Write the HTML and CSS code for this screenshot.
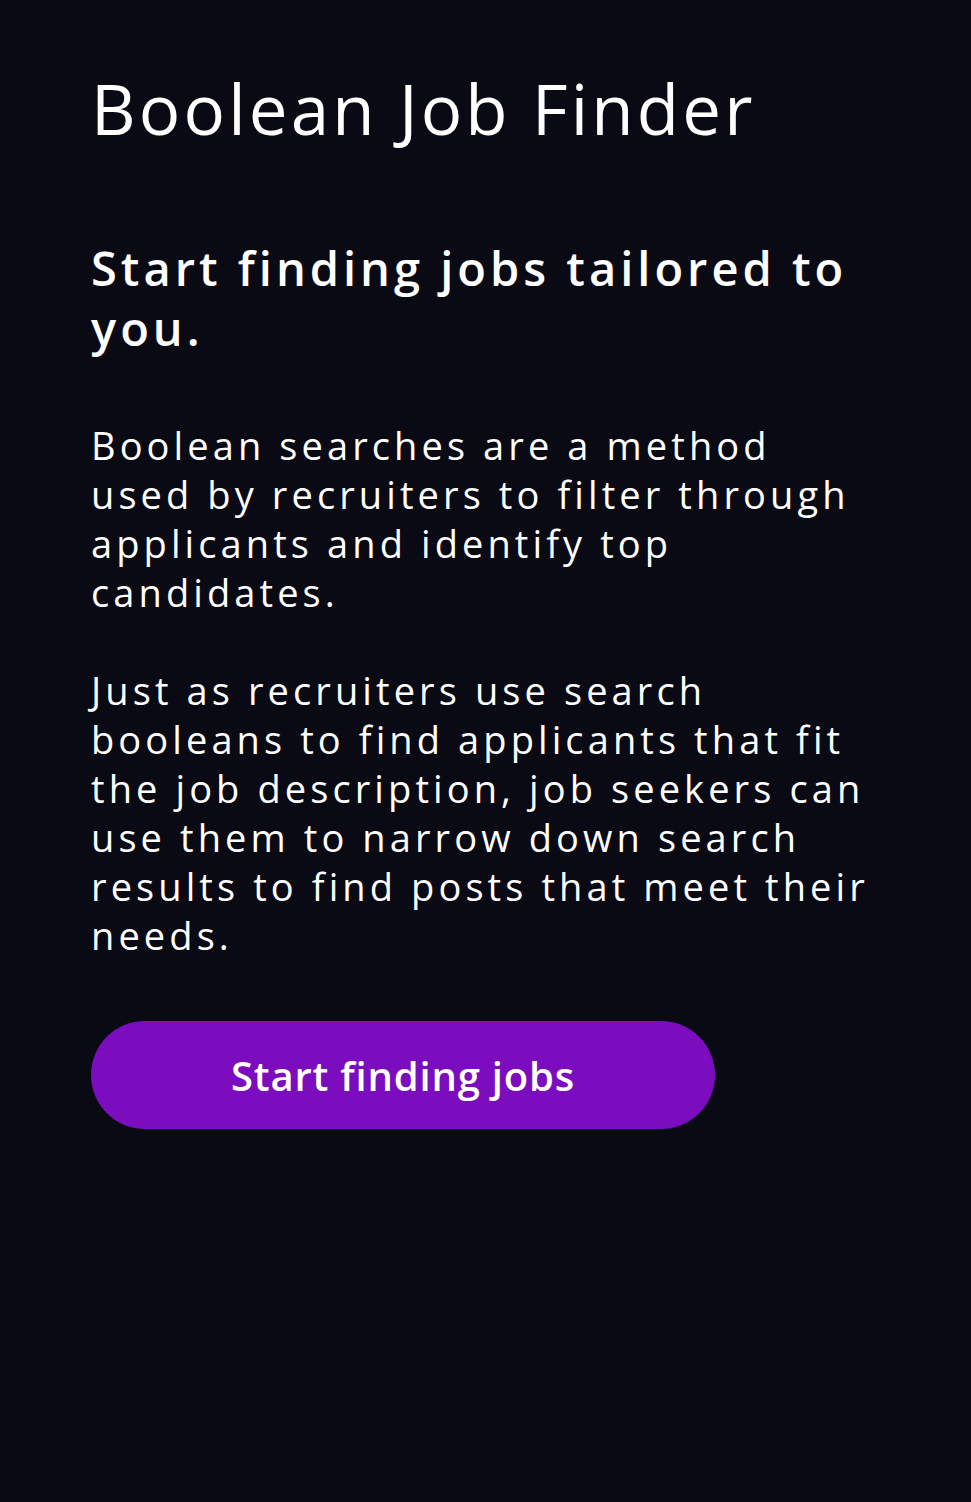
FILE: index.html
```html
<!DOCTYPE html>
<html lang="en">
<head>
<meta charset="utf-8">
<title>Boolean Job Finder</title>
<link rel="stylesheet" href="styles.css">
</head>
<body>
<main class="page">
  <h1 class="title">Boolean Job Finder</h1>
  <h2 class="subtitle">Start finding jobs tailored to<br>you.</h2>
  <p class="text">Boolean searches are a method<br>used by recruiters to filter through<br>applicants and identify top<br>candidates.</p>
  <p class="text">Just as recruiters use search<br>booleans to find applicants that fit<br>the job description, job seekers can<br>use them to narrow down search<br>results to find posts that meet their<br>needs.</p>
  <button class="cta" type="button">Start finding jobs</button>
</main>
</body>
</html>
```
FILE: styles.css
```css
* { box-sizing: border-box; }
html, body {
  margin: 0;
  background: #0a0a15;
  color: #ffffff;
  font-family: "Open Sans", "Noto Sans", sans-serif;
}
.page {
  display: flex;
  flex-direction: column;
  align-items: flex-start;
  padding: 60px 0 0 91px;
  min-height: 1502px;
}
.title {
  margin: 0;
  font-size: 69px;
  font-weight: 500;
  line-height: 96px;
  letter-spacing: 3.2px;
}
.subtitle {
  margin: 82px 0 0;
  font-size: 47px;
  font-weight: 600;
  line-height: 60px;
  letter-spacing: 4px;
}
.text {
  margin: 63px 0 0;
  font-size: 38px;
  font-weight: 400;
  line-height: 49px;
  letter-spacing: 4.1px;
}
.text + .text { margin-top: 49px; }
.cta {
  margin-top: 61px;
  width: 624px;
  height: 108px;
  border: 0;
  border-radius: 54px;
  background: #7b0dbe;
  color: #fff;
  font-family: inherit;
  font-size: 40px;
  font-weight: 600;
  letter-spacing: 0.8px;
  cursor: pointer;
}
```
